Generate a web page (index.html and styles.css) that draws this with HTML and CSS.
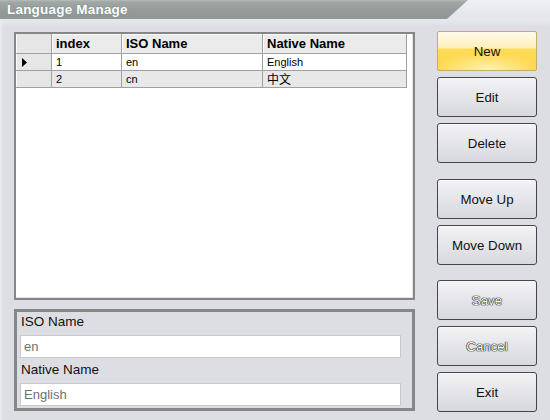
FILE: index.html
```
<!DOCTYPE html>
<html>
<head>
<meta charset="utf-8">
<link rel="stylesheet" href="styles.css">
</head>
<body>
<div class="window">
  <div class="titlebar">
    <div class="title-tab"><span class="title-text">Language Manage</span></div>
  </div>
  <div class="main">
    <div class="left">
      <div class="grid">
        <div class="grid-inner">
          <div class="row header">
            <div class="cell rh"></div>
            <div class="cell">index</div>
            <div class="cell">ISO Name</div>
            <div class="cell">Native Name</div>
          </div>
          <div class="row">
            <div class="cell rh"><svg class="arrow" width="5" height="9" viewBox="0 0 5 9"><polygon points="0,0 5,4.5 0,9" fill="#000"/></svg></div>
            <div class="cell">1</div>
            <div class="cell">en</div>
            <div class="cell">English</div>
          </div>
          <div class="row alt">
            <div class="cell rh"></div>
            <div class="cell">2</div>
            <div class="cell">cn</div>
            <div class="cell cjk">中文</div>
          </div>
        </div>
      </div>
      <div class="editor">
        <div class="label">ISO Name</div>
        <input class="field" type="text" value="en" readonly>
        <div class="label">Native Name</div>
        <input class="field" type="text" value="English" readonly>
      </div>
    </div>
    <div class="buttons">
      <button class="btn primary">New</button>
      <button class="btn">Edit</button>
      <button class="btn">Delete</button>
      <button class="btn group">Move Up</button>
      <button class="btn">Move Down</button>
      <button class="btn group2 disabled">Save</button>
      <button class="btn disabled">Cancel</button>
      <button class="btn">Exit</button>
    </div>
  </div>
</div>
</body>
</html>
```

FILE: styles.css
```
html, body {
  margin: 0;
  padding: 0;
}
body {
  width: 550px;
  height: 420px;
  overflow: hidden;
  background: #dddee3;
  font-family: "Liberation Sans", Arial, sans-serif;
}
.window {
  width: 550px;
  height: 420px;
}
.titlebar {
  height: 19px;
  background: linear-gradient(#eef0f3, #e4e5ea);
}
.title-tab {
  width: 468px;
  height: 19px;
  box-sizing: border-box;
  padding-left: 7px;
  display: flex;
  align-items: center;
  background: linear-gradient(#b3bab7 0, #a0a7a5 2px, #959c9a 50%, #8f9694 100%);
  clip-path: polygon(0 0, 468px 0, 447px 19px, 0 19px);
}
.title-text {
  color: #fff;
  font-weight: bold;
  font-size: 13.5px;
  letter-spacing: 0.2px;
  line-height: 15px;
  text-shadow: 0 0 1px rgba(80, 90, 88, 0.6);
}
.main {
  display: flex;
  height: 401px;
  box-sizing: border-box;
  padding: 12px 0 0 14px;
  background: linear-gradient(#e8e9ee, #dddee3 8px);
  box-shadow: inset 2px 0 0 #e7e8ed;
}
.left {
  width: 401px;
  padding-top: 1px;
  display: flex;
  flex-direction: column;
}
.grid {
  height: 268px;
  box-sizing: border-box;
  border: 2px solid #868686;
  background: #fff;
}
.grid-inner {
  height: 100%;
  box-sizing: border-box;
  border-right: 1px solid #e2e2e2;
  border-bottom: 1px solid #e2e2e2;
}
.row {
  display: grid;
  grid-template-columns: 36px 70px 141px 144px;
  height: 17px;
}
.row.header {
  height: 20px;
}
.cell {
  box-sizing: border-box;
  border-right: 1px solid #a0a0a0;
  border-bottom: 1px solid #a0a0a0;
  padding-left: 4px;
  font-size: 11px;
  line-height: 16px;
  color: #000;
  white-space: nowrap;
  overflow: hidden;
}
.header .cell {
  background: #ebebeb;
  font-weight: bold;
  font-size: 13px;
  line-height: 20px;
  box-shadow: inset 1px 1px 0 #fbfbfb;
}
.cell.rh {
  background: #e6e6e6;
  box-shadow: inset 1px 0 0 #fbfbfb;
  padding-left: 6px;
}
.row.alt .cell {
  background: #e8e8e8;
}
.row.alt .cell.rh {
  background: #e6e6e6;
}
.arrow {
  display: block;
  margin-top: 4px;
}
.cjk {
  font-family: "Noto Sans CJK SC", sans-serif;
  font-size: 12px;
  line-height: 15px;
}
.editor {
  margin-top: 9px;
  height: 102px;
  box-sizing: border-box;
  border: 3px solid #878787;
  padding: 2px 12px 0 3px;
}
.label {
  font-size: 13.5px;
  line-height: 16px;
  padding-left: 1px;
  margin-bottom: 5px;
  color: #111;
}
.field {
  display: block;
  width: 381px;
  height: 23px;
  margin: 0 0 4px 0;
  box-sizing: border-box;
  border: 1px solid #c9c9c9;
  padding: 0 3px;
  background: #fff;
  font-family: "Liberation Sans", Arial, sans-serif;
  font-size: 13px;
  color: #6f6f6f;
  outline: none;
}
.buttons {
  margin-left: 22px;
  display: flex;
  flex-direction: column;
}
.btn {
  width: 100px;
  height: 40px;
  margin: 0 0 6px 0;
  padding: 0;
  box-sizing: border-box;
  border: 1px solid #464646;
  border-radius: 3px;
  background: linear-gradient(#f3f3f6, #d7d8dd);
  box-shadow: inset 0 1px 0 #fafafc;
  font-family: "Liberation Sans", Arial, sans-serif;
  font-size: 13.3px;
  color: #111;
}
.btn.primary {
  border-color: #c9aa66;
  border-radius: 2px;
  background:
    radial-gradient(ellipse 55% 45% at 50% 100%, rgba(255, 246, 190, 0.9), rgba(255, 246, 190, 0)),
    linear-gradient(#fffbe9 0%, #fff0b8 42%, #ffdc58 45%, #ffd547 100%);
  box-shadow: none;
}
.btn.group {
  margin-top: 10px;
}
.btn.group2 {
  margin-top: 9px;
}
.btn.disabled {
  color: #fbfbfb;
  text-shadow: 0 0 1px #000, 0 0 1px #000, 0 0 1px #222;
}
```
